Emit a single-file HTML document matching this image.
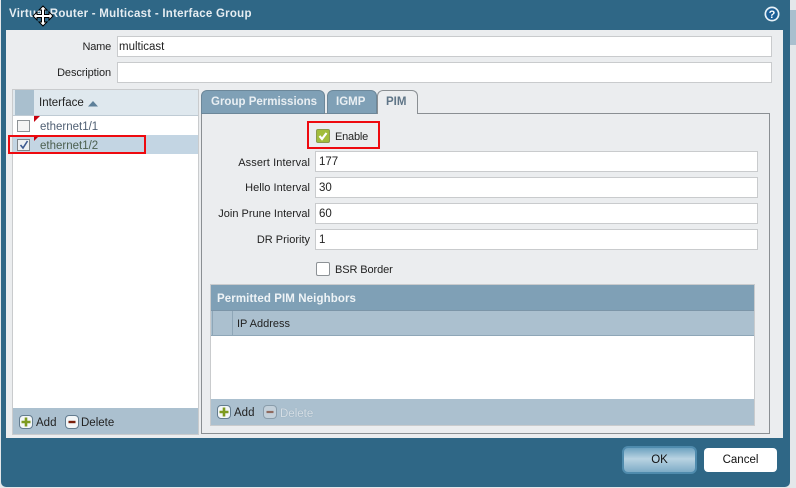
<!DOCTYPE html>
<html><head><meta charset="utf-8"><style>
html,body{margin:0;padding:0}
body{width:796px;height:488px;overflow:hidden;background:#e4e7ea;position:relative;font-family:"Liberation Sans",sans-serif;font-size:11.5px;color:#222}
div,span{position:absolute;box-sizing:border-box;white-space:nowrap}
.l{line-height:14px}
.r{text-align:right;width:100px;font-size:11px}
.in{background:#fff;border:1px solid #c9cbcd;line-height:20px;padding-left:3px;color:#222}
.b{font-weight:bold}
</style></head><body>
<div style="left:1px;top:0;width:789px;height:487px;background:#2f6786;border-radius:0 0 5px 5px"></div>
<div style="left:790px;top:10px;width:6px;height:35px;background:#a9bfce"></div>
<div class="l b" style="left:9px;top:7px;color:#e6edf2;font-size:11.5px;letter-spacing:.25px">Virtual Router - Multicast - Interface Group</div>
<svg style="position:absolute;left:31px;top:3px" width="24" height="26" viewBox="0 0 24 26"><path d="M12 3l4 4h-2.500v4.500H18V9l4 4-4 4v-2.500h-4.500V19H16l-4 4-4-4h2.500v-4.500H6V17l-4-4 4-4v2.500h4.500V7H8z" fill="#fff" stroke="#000"/></svg>
<svg style="position:absolute;left:764px;top:6px" width="16" height="16" viewBox="0 0 16 16"><circle cx="8" cy="8" r="7.500" fill="#e8f2f8"/><circle cx="8" cy="8" r="5.800" fill="#1c5f96"/><text x="8" y="12" text-anchor="middle" font-family="Liberation Sans" font-weight="bold" font-size="11" fill="#fff">?</text></svg>

<div style="left:6px;top:30px;width:777px;height:408px;background:#ebedef"></div>
<div class="l r" style="left:11px;top:40px;letter-spacing:-.2px">Name</div>
<div class="in" style="left:117px;top:36px;width:655px;height:21px;font-size:11.5px;padding-left:1px">multicast</div>
<div class="l r" style="left:11px;top:66px;letter-spacing:-.1px">Description</div>
<div class="in" style="left:117px;top:62px;width:655px;height:21px"></div>

<!-- left grid -->
<div style="left:12px;top:89px;width:187px;height:346px;background:#fff;border:1px solid #c9cbcd"></div>
<div style="left:13px;top:90px;width:185px;height:26px;background:#dfe8ee;border-bottom:1px solid #bfcbd4"></div>
<div style="left:15px;top:90px;width:19px;height:25px;background:#a9bfce"></div>
<div class="l" style="left:39px;top:96px;font-size:11.500px">Interface</div>
<svg style="position:absolute;left:88px;top:100px" width="11" height="7"><path d="M0 6.500L5 1l5 5.500z" fill="#5d7f99"/></svg>
<div style="left:13px;top:135px;width:185px;height:19px;background:#c3d5e3"></div>
<svg style="position:absolute;left:34px;top:116px" width="6" height="6"><path d="M0 0h6L0 6z" fill="#c8000e"/></svg>
<svg style="position:absolute;left:34px;top:135px" width="6" height="6"><path d="M0 0h6L0 6z" fill="#c8000e"/></svg>
<div style="left:17px;top:120px;width:13px;height:12px;background:#f4f4f4;border:1px solid #8d9296"></div>
<div class="l" style="left:40px;top:120px;color:#4f5f73">ethernet1/1</div>
<div style="left:17px;top:139px;width:13px;height:12px;background:#edf0f3;border:1px solid #7f8589"></div>
<svg style="position:absolute;left:18px;top:139px" width="12" height="12"><path d="M2.500 6l2.500 3L9.500 2" fill="none" stroke="#3d5a92" stroke-width="1.600"/></svg>
<div class="l" style="left:40px;top:139px;color:#4c6050">ethernet1/2</div>
<div style="left:8px;top:135px;width:138px;height:19px;border:2px solid #ee0a0f"></div>
<div style="left:13px;top:408px;width:185px;height:26px;background:#abc0cf"></div>
<div style="left:19px;top:415px;width:14px;height:14px;background:#f3f6f7;border:1px solid #637c8f;border-radius:4px"></div>
<svg style="position:absolute;left:20px;top:416px" width="12" height="12"><path d="M6 1.500v9M1.500 6h9" stroke="#7d9a1e" stroke-width="2.600"/></svg>
<div class="l" style="left:36px;top:416px;font-size:11.500px">Add</div>
<div style="left:65px;top:415px;width:14px;height:14px;background:#f3f6f7;border:1px solid #637c8f;border-radius:4px"></div>
<svg style="position:absolute;left:66px;top:416px" width="12" height="12"><path d="M2.500 6h7" stroke="#7a1f0a" stroke-width="2.400"/></svg>
<div class="l" style="left:81px;top:416px;font-size:11.500px">Delete</div>

<!-- tab panel -->
<div style="left:201px;top:113px;width:569px;height:321px;background:#ebedef;border:1px solid #8a8f93;border-right:1px solid #8a8f93"></div>
<div class="b l" style="left:201px;top:90px;width:124px;height:24px;background:#7fa0b6;border:1px solid #6c8799;border-radius:6px 6px 0 0;color:#e9eff3;padding:4px 0 0 9px">Group Permissions</div>
<div class="b l" style="left:327px;top:90px;width:50px;height:24px;background:#7fa0b6;border:1px solid #6c8799;border-radius:6px 6px 0 0;color:#e9eff3;padding:4px 0 0 8px">IGMP</div>
<div class="b l" style="left:377px;top:90px;width:41px;height:24px;background:#ebedef;border:1px solid #8a8f93;border-bottom:none;border-radius:6px 6px 0 0;color:#5f7587;padding:4px 0 0 8px">PIM</div>

<div style="left:307px;top:121px;width:73px;height:28px;border:2px solid #ee0a0f"></div>
<div style="left:316px;top:129px;width:14px;height:14px;background:#a2bd3b;border:1px solid #8a9a4c;border-radius:2px"></div>
<svg style="position:absolute;left:317px;top:130px" width="12" height="12"><path d="M2.500 6l2.500 3 4.500-6" fill="none" stroke="#fff" stroke-width="2.200"/></svg>
<div class="l" style="left:335px;top:130px;font-size:11px;letter-spacing:-.2px">Enable</div>

<div class="l r" style="left:210px;top:156px;letter-spacing:.1px">Assert Interval</div>
<div class="in" style="left:315px;top:151px;width:443px;height:21px;font-size:11.5px">177</div>
<div class="l r" style="left:210px;top:181px;letter-spacing:.05px">Hello Interval</div>
<div class="in" style="left:315px;top:177px;width:443px;height:21px;font-size:11.5px">30</div>
<div class="l r" style="left:210px;top:207px">Join Prune Interval</div>
<div class="in" style="left:315px;top:203px;width:443px;height:21px;font-size:11.5px">60</div>
<div class="l r" style="left:210px;top:233px">DR Priority</div>
<div class="in" style="left:315px;top:229px;width:443px;height:21px;font-size:11.5px">1</div>

<div style="left:316px;top:262px;width:14px;height:14px;background:#fff;border:1px solid #8d9296;border-radius:2px"></div>
<div class="l" style="left:335px;top:263px;font-size:11px;letter-spacing:-.1px">BSR Border</div>

<!-- permitted -->
<div style="left:210px;top:284px;width:545px;height:142px;background:#fff;border:1px solid #c9cbcd"></div>
<div class="b l" style="left:211px;top:285px;width:543px;height:25px;background:#7fa0b6;color:#eef3f6;padding:7px 0 0 6px;letter-spacing:.1px">Permitted PIM Neighbors</div>
<div style="left:211px;top:310px;width:543px;height:26px;background:#abc0cf;border-top:1px solid #7c95a8;border-bottom:1px solid #8ea6b7"></div>
<div style="left:212px;top:311px;width:1px;height:24px;background:#8ea6b7"></div>
<div style="left:232px;top:311px;width:1px;height:24px;background:#8ea6b7"></div>
<div class="l" style="left:237px;top:317px;font-size:11px">IP Address</div>
<div style="left:211px;top:399px;width:543px;height:26px;background:#abc0cf"></div>
<div style="left:217px;top:405px;width:14px;height:14px;background:#f3f6f7;border:1px solid #637c8f;border-radius:4px"></div>
<svg style="position:absolute;left:218px;top:406px" width="12" height="12"><path d="M6 1.500v9M1.500 6h9" stroke="#7d9a1e" stroke-width="2.600"/></svg>
<div class="l" style="left:234px;top:406px">Add</div>
<div style="left:263px;top:405px;width:14px;height:14px;background:#c3d0da;border:1px solid #8a9dab;border-radius:4px"></div>
<svg style="position:absolute;left:264px;top:406px" width="12" height="12"><path d="M2.500 6h7" stroke="#8f6a5f" stroke-width="2.200"/></svg>
<div class="l" style="left:280px;top:407px;color:#d5dee5;text-shadow:0 0 1px #8ba0b0">Delete</div>

<!-- buttons -->
<div style="left:622px;top:446px;width:75px;height:28px;background:linear-gradient(#6ea2c0,#b9d3e2 45%,#7eabc6);border:2px solid #4f8bad;border-radius:6px;text-align:center;line-height:25px;font-size:11.5px;color:#111">OK</div>
<div style="left:704px;top:448px;width:73px;height:24px;background:#fff;border-radius:4px;text-align:center;line-height:25px;font-size:11.5px;color:#111">Cancel</div>
</body></html>
